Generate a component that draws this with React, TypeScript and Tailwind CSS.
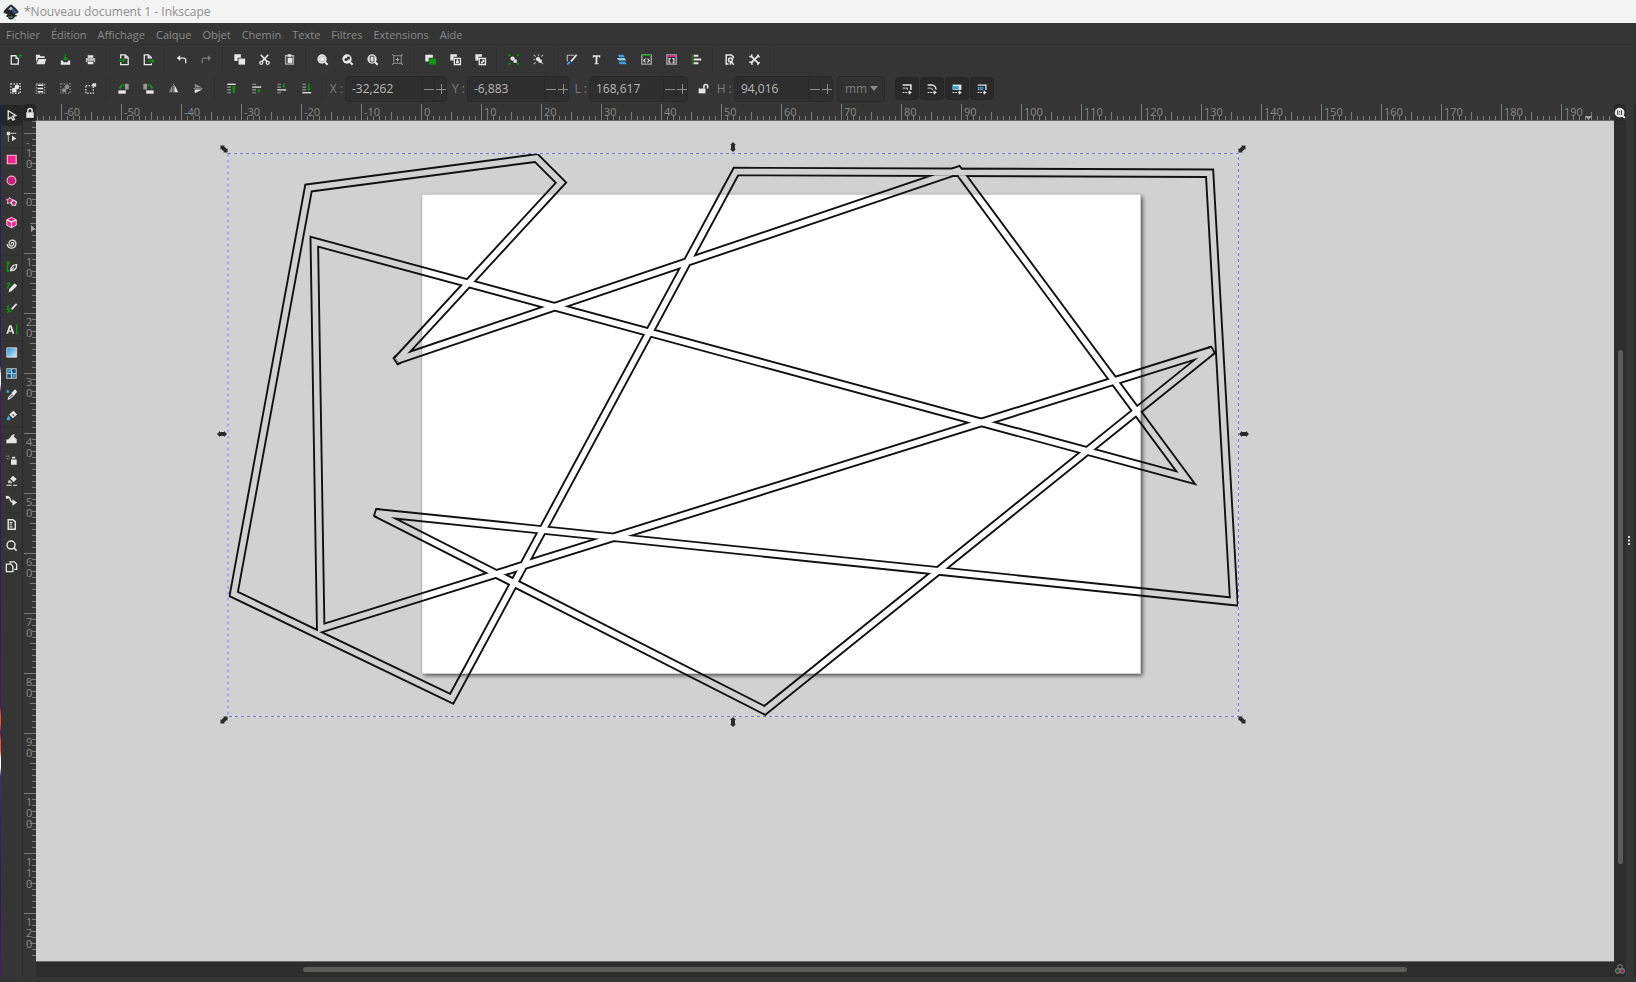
import type { ReactNode } from "react";

const GREEN = "#0b960f";
const BLUE = "#3aa5e0";
const PINK = "#ff1f8f";

function Icon({ children, size = 16 }: { children: ReactNode; size?: number }) {
  return (
    <svg width={size} height={size} viewBox="0 0 16 16" fill="none" stroke="#e6e6e6" strokeWidth={1.4} className="shrink-0">
      {children}
    </svg>
  );
}

const fill = { fill: "#e6e6e6", stroke: "none" };
const green = { fill: GREEN, stroke: "none" };

const icons: Record<string, ReactNode> = {
  new: (
    <>
      <path d="M9 4H3.5v9h7.500V7" />
      <path d="M8 3.500v4h4z" {...fill} />
      <path d="M13 2v4M11 4h4" stroke={GREEN} strokeWidth={1.2} />
    </>
  ),
  open: <path d="M3 3h4l1 1.500h4.500V6.500H5.500L3.500 11zM6.200 7.500H14L12.500 13H3.500z" {...fill} />,
  save: (
    <>
      <path d="M3 9h2l1 2h4l1-2h2v4.500H3z" {...fill} />
      <path d="M7.300 2h1.400v4.500h2L8 9.500 5.300 6.500h2z" {...green} />
    </>
  ),
  print: (
    <>
      <path d="M5 3.500h6V6H5zM5 10h6v3H5z" {...fill} />
      <path d="M3 6.500h10v4.500h-1.500V9.500h-7V11H3z" fill="#b5b5b5" stroke="none" />
    </>
  ),
  import: (
    <>
      <path d="M5 7V3h5l3 3v7.500H5V11" />
      <path d="M9 3v4h4z" {...fill} />
      <path d="M3 8.300h4V6.500L10.500 9 7 11.500V9.700H3z" {...green} />
    </>
  ),
  export: (
    <>
      <path d="M11 7V6L8 3H3.500v10.500H11V12" />
      <path d="M7 3v4h4z" {...fill} />
      <path d="M7 8.800h4.500V7L15 9.500 11.500 12v-1.800H7z" {...green} />
    </>
  ),
  undo: (
    <>
      <path d="M5 6.500h5.500a2 2 0 0 1 2 2V12" />
      <path d="M6.500 3.500v6L3 6.500z" {...fill} />
    </>
  ),
  redo: (
    <g opacity={0.4}>
      <path d="M11 6.500H5.500a2 2 0 0 0-2 2V12" />
      <path d="M9.500 3.500v6L13 6.500z" {...fill} />
    </g>
  ),
  copy: (
    <>
      <path d="M2.500 2.500h7V6H6v3.500H2.500z" {...fill} />
      <path d="M7 7h7v6.500H7z" {...fill} />
    </>
  ),
  cut: (
    <>
      <path d="M4 3l6.500 7M12 3L5.500 10" strokeWidth={1.700} />
      <circle cx="4.500" cy="11.500" r="1.600" />
      <circle cx="11.500" cy="11.500" r="1.600" />
    </>
  ),
  paste: (
    <>
      <path d="M3.800 4h8.400v9H3.800z" stroke="#aaa" />
      <path d="M6 2.500h4V5H6zM6 6h5v6H6z" {...fill} />
    </>
  ),
  zoomSel: (
    <>
      <circle cx="7.500" cy="7.500" r="5" {...fill} />
      <path d="M10 10l3.500 3.500" strokeWidth={2.200} />
      <path d="M5 5h5v5H5z" stroke="#aaa" strokeWidth={1} strokeDasharray="1 1" />
    </>
  ),
  zoomDraw: (
    <>
      <circle cx="7.500" cy="7.500" r="5" {...fill} />
      <path d="M10 10l3.500 3.500" strokeWidth={2.200} />
      <circle cx="6.500" cy="8" r="1.700" fill="#353535" stroke="none" />
      <path d="M7.500 5h3v3h-3z" fill="#353535" stroke="none" />
    </>
  ),
  zoomPage: (
    <>
      <circle cx="7.500" cy="7.500" r="5" {...fill} />
      <path d="M10 10l3.500 3.500" strokeWidth={2.200} />
      <path d="M5.500 4.500h4v6h-4z" stroke="#444" strokeWidth={1} />
    </>
  ),
  zoomCenter: (
    <>
      <path d="M4 4h8v8H4z" stroke="#999" strokeWidth={1} />
      <path d="M8 6v4M6 8h4M2.500 2.500l1.500 1.500M13.500 2.500l-1.500 1.500M2.500 13.500l1.500-1.500M13.500 13.500l-1.500-1.500" stroke="#aaa" strokeWidth={1.100} />
    </>
  ),
  duplicate: (
    <>
      <path d="M2.500 3h8v3H6v4H2.500z" {...fill} />
      <path d="M6.500 7H14v6.500H6.500z" {...green} />
    </>
  ),
  clone: (
    <>
      <path d="M2.500 2.500h7V5H6v4H2.500z" {...fill} />
      <path d="M6.700 6.700h6.600v6.600H6.700z" />
      <path d="M8.500 9.500h3V12h-3zM9 8h2v2H9z" {...fill} />
    </>
  ),
  unclone: (
    <>
      <path d="M2.500 2.500h7V5H6v4H2.500z" {...fill} />
      <path d="M6.700 6.700h6.600v6.600H6.700z" />
      <path d="M8.500 10h2v2h-2zM10 8h2v3h-2z" {...fill} />
    </>
  ),
  group: (
    <>
      <path d="M2.500 2.500h2v2h-2zM11.500 2.500h2v2h-2zM2.500 11.500h2v2h-2zM11.500 11.500h2v2h-2z" {...green} />
      <circle cx="7" cy="7" r="2.300" {...fill} />
      <path d="M8 8h3.500v3.500H8z" {...fill} />
    </>
  ),
  ungroup: (
    <>
      <path d="M3 3l2 2M13 3l-2 2M3 13l2-2M13 13l-2-2M8 2.500v2M2.500 8h2" stroke="#aaa" strokeWidth={1.200} />
      <circle cx="7.500" cy="7.500" r="2.300" {...fill} />
      <path d="M8 8h3.500v3.500H8z" {...fill} />
    </>
  ),
  fillStroke: (
    <>
      <path d="M3.500 10V3.500H11" stroke="#bbb" strokeWidth={1.200} />
      <path d="M13.500 3L7.500 10" strokeWidth={1.800} />
      <path d="M3 13.500c0-2 1.500-3.500 4-3.500 0 2-1.500 3.500-4 3.500z" fill={BLUE} stroke="none" />
    </>
  ),
  text: <path d="M4 3.500h8v2.500h-1V5H9v7h1v1H6v-1h1V5H5v1H4z" {...fill} />,
  layers: (
    <>
      <path d="M4 3h6l1.500 2.500h-6z" fill={BLUE} stroke="none" />
      <path d="M3 6.500h8.500L13 9H5z" fill="#8ed0f5" stroke="none" />
      <path d="M5 10.500h7l1.500 2.500H6z" fill={BLUE} stroke="none" />
    </>
  ),
  xml: (
    <>
      <path d="M3 3h10v10H3z" stroke="#aaa" />
      <path d="M3 3.500h10" stroke={GREEN} />
      <path d="M7 7L5 9l2 2M9 7l2 2-2 2" strokeWidth={1.200} />
    </>
  ),
  selectors: (
    <>
      <path d="M3 3h10v10H3z" stroke="#aaa" />
      <path d="M3 4.500h10" stroke={PINK} />
      <path d="M7 7H5.500v4.500H7M9 7h1.500v4.500H9" strokeWidth={1.200} />
    </>
  ),
  align: (
    <>
      <path d="M3.500 2.500v11" stroke={GREEN} strokeWidth={1} />
      <path d="M5 4h5M5 8h8M5 12h5" strokeWidth={2} />
    </>
  ),
  docProps: (
    <>
      <path d="M12 7V5L10 3.200H4.500v9.600H7" strokeWidth={1.600} />
      <circle cx="9" cy="8.500" r="2" strokeWidth={1.600} />
      <path d="M9.500 10l3 3.500M9 10.500v3" strokeWidth={1.600} />
    </>
  ),
  prefs: (
    <>
      <path d="M5 5l7.500 7.500M12.500 3.500L4 12" strokeWidth={1.900} />
      <path d="M2.500 4.800L4.800 5 5.200 2.500M13.700 5.200L11.500 5l.3-2.500M5.500 13.700L5 11l-2.600-.300M11 13.500l2.500-2.500" strokeWidth={1.500} />
    </>
  ),
  selAll: (
    <>
      <path d="M3 3h10v10H3z" strokeWidth={1.300} strokeDasharray="1.500 1.500" />
      <circle cx="9.500" cy="6.500" r="2.500" {...fill} />
      <path d="M4.500 7.500h4.500v4.500H4.500z" {...fill} />
    </>
  ),
  selLayers: (
    <>
      <path d="M3.500 3h9v10h-9z" stroke="#aaa" strokeWidth={1.200} strokeDasharray="1.500 1.500" />
      <path d="M5 4.500h6M5 8h6M5 11.500h6" strokeWidth={1.700} />
    </>
  ),
  deselect: (
    <g opacity={0.5}>
      <path d="M3 3h10v10H3z" strokeWidth={1.200} strokeDasharray="1.500 1.500" />
      <circle cx="9.500" cy="6.500" r="2.500" {...fill} />
      <path d="M4.500 8h4v4h-4z" {...fill} />
    </g>
  ),
  selBox: (
    <>
      <path d="M3 5h8v8H3z" strokeWidth={1.300} strokeDasharray="1.500 1.500" />
      <path d="M10 2.500h4v3.500h-4z" {...fill} />
    </>
  ),
  rotL: (
    <>
      <path d="M9.500 3h4v6h-4z" fill="#999" stroke="none" />
      <path d="M2.500 10h8v3.500h-8z" {...fill} />
      <path d="M4.500 8.500C4.500 5.500 6 4 8.500 4" stroke={GREEN} />
      <path d="M2.500 6h4l-2 3z" {...green} />
    </>
  ),
  rotR: (
    <>
      <path d="M2.500 3h4v6h-4z" fill="#999" stroke="none" />
      <path d="M5.500 10h8v3.500h-8z" {...fill} />
      <path d="M7.500 4c2.500 0 4 1.500 4 4.500" stroke={GREEN} />
      <path d="M9.500 6h4l-2 3z" {...green} />
    </>
  ),
  flipH: (
    <>
      <path d="M7 4v8H3z" fill="#8a8a8a" stroke="none" />
      <path d="M9 4v8h4z" {...fill} />
      <path d="M8 3v10" strokeWidth={0.800} strokeDasharray="1 1" />
    </>
  ),
  flipV: (
    <>
      <path d="M4 3v4h8z" fill="#8a8a8a" stroke="none" />
      <path d="M4 9v4l8-4z" {...fill} />
      <path d="M3 8h10" strokeWidth={0.800} strokeDasharray="1 1" />
    </>
  ),
  top: (
    <>
      <path d="M3.500 3.500h9" />
      <path d="M3.500 6.500h4M3.500 9.500h4M3.500 12.500h4" stroke="#999" strokeWidth={1.200} />
      <path d="M9.300 13V8H8l2.500-3L13 8h-1.300v5z" {...green} />
    </>
  ),
  raise: (
    <>
      <path d="M3.500 6.500h9.500" />
      <path d="M3.500 3.500h4M3.500 9.500h4M3.500 12.500h4" stroke="#999" strokeWidth={1.200} />
      <path d="M9.800 13v-2.500H8.500L10.500 8l2 2.500h-1.300V13z" {...green} />
    </>
  ),
  lower: (
    <>
      <path d="M3.500 9.500h9.500" />
      <path d="M3.500 3.500h4M3.500 6.500h4M3.500 12.500h4" stroke="#999" strokeWidth={1.200} />
      <path d="M9.800 2.500V5H8.500l2 2.500 2-2.500h-1.300V2.500z" {...green} />
    </>
  ),
  bottom: (
    <>
      <path d="M3.500 12.500h9.500" />
      <path d="M3.500 3.500h4M3.500 6.500h4M3.500 9.500h4" stroke="#999" strokeWidth={1.200} />
      <path d="M9.800 2.500V8H8.500l2 3 2-3h-1.300V2.500z" {...green} />
    </>
  ),
  unlock: (
    <>
      <path d="M2 8h8.500v6H2z" {...fill} />
      <path d="M8.500 8V5.500a2.300 2.300 0 0 1 4.600 0V8" strokeWidth={1.900} />
    </>
  ),
  lock: (
    <>
      <path d="M3 7h10v7.500H3z" {...fill} />
      <path d="M5.200 7V4.700a2.800 2.800 0 0 1 5.600 0V7" strokeWidth={2} />
    </>
  ),
  scaleStroke: (
    <>
      <path d="M3 3.500h9.500V9" strokeWidth={1.700} />
      <path d="M3 7h5.500v2" stroke="#aaa" strokeWidth={1.200} />
      <path d="M3 12h7" strokeDasharray="2 1" />
      <path d="M10 9.500v5l3.500-2.500z" {...fill} />
    </>
  ),
  scaleRadii: (
    <>
      <path d="M3 3.500h4.500a5 5 0 0 1 5 5" strokeWidth={1.700} />
      <path d="M3 7h3a3 3 0 0 1 3 2.500" stroke="#aaa" strokeWidth={1.200} />
      <path d="M3 12h7" strokeDasharray="2 1" />
      <path d="M10 9.500v5l3.500-2.500z" {...fill} />
    </>
  ),
  moveGradient: (
    <>
      <path d="M3 3h10v6H3z" {...fill} />
      <path d="M3 4.500h7v4H3z" fill={BLUE} stroke="none" />
      <path d="M3 12h7" strokeDasharray="2 1" />
      <path d="M10 9.500v5l3.500-2.500z" {...fill} />
    </>
  ),
  movePattern: (
    <>
      <path d="M3 3.500h9.500V9" />
      <path d="M3 5.500h7v4H3z" fill="#2e6d96" stroke="none" />
      <path d="M4 6v3M7 6v3" stroke="#8ed0f5" strokeWidth={1} strokeDasharray="1 1" />
      <path d="M3 12h7" strokeDasharray="2 1" />
      <path d="M10 9.500v5l3.500-2.500z" {...fill} />
    </>
  ),
  select: <path d="M4.500 3l8 5-3 .8 1.700 3.200-1.700 1-1.800-3.300L4.500 12z" />,
  node: (
    <>
      <path d="M3 3h3.500v3.500H3z" {...fill} />
      <path d="M6 4.700h7M4.700 6v7.500" stroke="#aaa" strokeWidth={1.200} />
      <path d="M8.500 7v6l4.500-3z" {...fill} />
    </>
  ),
  rect: <path d="M3.500 3.500h9.500v9H3.500z" fill={PINK} stroke="#f3b6d5" strokeWidth={1.200} />,
  ellipse: <circle cx="8" cy="8" r="4.700" fill="#c4217a" stroke="#e8a9cb" strokeWidth={1.300} />,
  star: (
    <>
      <path d="M6 3.500l1.300 2 2.400.3-1.500 2 .5 2.500L6 9.500l-2.500.8.500-2.500-1.500-2 2.400-.3z" fill="#b92a78" stroke="#d9c3cf" strokeWidth={1} />
      <path d="M10.500 6.500l2.800 2-1 3.500H8.700l-1-3.500z" fill="#b92a78" stroke="#e6e6e6" strokeWidth={1.200} />
    </>
  ),
  box3d: (
    <>
      <path d="M8 2.500l5 2.500v6l-5 2.500L3 11V5z" fill={PINK} stroke="#f3d3e2" strokeWidth={1} />
      <path d="M3 5l5 2.500L13 5M8 7.500v6" stroke="#fff" strokeWidth={1.200} />
      <path d="M8 4l2.500 1.200L8 6.500 5.500 5.200z" fill="#b92a78" stroke="none" />
    </>
  ),
  spiral: <path d="M8 8.500c-.8-1.500 1.500-2.200 2.200-.7C11 10 8.500 11.300 6.700 10.300 4.300 8.800 5.300 5 8 4.500c3-.5 5.300 2 4.700 4.700-.4 2-2 3.500-4.200 3.800-2.500.2-5-1.500-5.200-4.500" strokeWidth={1.300} />,
  pen: (
    <>
      <path d="M3.500 13c-.5-3 0-6 1-8" stroke={GREEN} />
      <path d="M3 2.500h3v3H3zM3 11.500h3v2H3z" {...green} />
      <path d="M13.500 6c-3 0-6 1-6.500 6.500 4 0 6.500-2 6.500-6.500zM7 13l3.500-4" strokeWidth={1.300} />
    </>
  ),
  pencil: (
    <>
      <path d="M3 4.500C5 2.500 7 3.500 6 5S2.500 8 4.500 9" stroke={GREEN} />
      <path d="M11.500 3.500L14 6l-6 6-3 1 .5-3.500z" {...fill} />
    </>
  ),
  calligraphy: (
    <>
      <path d="M13.500 3L8 9" strokeWidth={1.800} />
      <path d="M3 6l2-1-1.500 4 2-.5L4 12l4-1.500" stroke={GREEN} strokeWidth={1.200} />
    </>
  ),
  textTool: (
    <>
      <path d="M5.500 3.500h2.500l3 9H9l-.6-2H5.100l-.6 2H2.500zM5.600 9h2.200L6.700 5.500z" {...fill} />
      <path d="M13.500 2.500v11" stroke={GREEN} />
    </>
  ),
  gradient: (
    <>
      <defs>
        <linearGradient id="sky" x1="0" y1="0" x2="1" y2="1">
          <stop offset="0" stopColor="#1d8fd8" />
          <stop offset="1" stopColor="#d9f0fc" />
        </linearGradient>
      </defs>
      <path d="M3 3h10.500v10H3z" fill="url(#sky)" stroke="#d0d0d0" strokeWidth={1} />
    </>
  ),
  mesh: (
    <>
      <path d="M3 3h10v10H3z" fill="#1b4c70" stroke="#c8c8c8" strokeWidth={1.100} />
      <path d="M8 3c-1 2 1 3 0 5s1 3 0 5M3 8c2-1 3 1 5 0s3 1 5 0" stroke="#a9dcf8" strokeWidth={1.200} />
      <path d="M4 4h3v3H4zM9 9h3v3H9z" fill={BLUE} stroke="none" />
    </>
  ),
  dropper: (
    <>
      <path d="M6 12.500l-1.500.5.500-2 4-4 1.500 1.500z" strokeWidth={1.100} />
      <path d="M8 6l4-3.500L14 5l-3.500 4z" {...fill} />
      <path d="M4 2.500c1.500 2 1.700 2.500 1.500 3.200-.5 1-2.500 1-3 0C2.300 5 3 4 4 2.500z" fill={BLUE} stroke="none" />
    </>
  ),
  bucket: (
    <>
      <path d="M5.500 7L10 3l4 4-4.500 4z" {...fill} />
      <path d="M9 6l2 1.500L9.500 9z" fill="#353535" stroke="none" />
      <path d="M5 8c2 2.500 2 3.500 1.500 4.300-.7 1.300-3 1.300-3.500 0C2.700 11.500 3.500 10 5 8z" fill={BLUE} stroke="none" />
    </>
  ),
  tweak: <path d="M2.500 13V9c2.500 0 3.500-1 4.500-3s3-3 4.500-2.500l-1 2.500c1 1.500 3 1.500 3 3v4z" {...fill} />,
  spray: (
    <>
      <path d="M7.500 8h6v5.500h-6zM8.500 5h3.500v2H8.500z" {...fill} />
      <path d="M2.500 4.500H6M3 7h3" stroke="#999" strokeDasharray="1 1" />
    </>
  ),
  eraser: (
    <>
      <path d="M9.500 3l4 3.500-3 3-4-3.500z" {...fill} />
      <path d="M5.500 7l3.500 3-1 1H4.500L4 9z" fill="#bbb" stroke="none" />
      <path d="M2.500 13H8M9.500 13H14" strokeWidth={1.200} />
    </>
  ),
  connector: (
    <>
      <path d="M2.500 3.500H5c2 0 1 5 4 5h2" strokeWidth={1.500} />
      <path d="M9 5.500v7L14 9z" {...fill} />
      <path d="M2 2h3v3H2z" {...fill} />
    </>
  ),
  measure: (
    <>
      <path d="M4.500 3h5l2.500 2v8H4.500z" strokeWidth={1.500} />
      <path d="M6 6h3M6 8.300h2.500M6 10.500h3" strokeWidth={1.200} />
    </>
  ),
  zoom: (
    <>
      <circle cx="7.500" cy="7.500" r="4.300" strokeWidth={1.500} />
      <path d="M10.500 10.500l3 3" strokeWidth={1.700} />
    </>
  ),
  pages: (
    <>
      <path d="M6.500 5V3H11l2.500 2.500V11H11" strokeWidth={1.400} />
      <path d="M2.500 5.500h5L9.500 8v5.500h-7z" strokeWidth={1.400} />
    </>
  ),
  oneToOne: (
    <>
      <circle cx="7.500" cy="7.500" r="6.500" {...fill} />
      <path d="M11 11l3.500 3.500" strokeWidth={2.500} />
      <path d="M5 4.500v6M10 4.500v6M7.500 5.500v1.500M7.500 8.500v1.500" stroke="#353535" strokeWidth={1.300} />
    </>
  ),
  color: (
    <>
      <circle cx="8" cy="5" r="3" stroke="#777" />
      <circle cx="5" cy="10.500" r="3" fill="#1f5a2c" stroke="#777" />
      <circle cx="11" cy="10.500" r="3" fill="#8d2360" stroke="#777" />
    </>
  ),
};

const menus = ["Fichier", "Édition", "Affichage", "Calque", "Objet", "Chemin", "Texte", "Filtres", "Extensions", "Aide"];

const commandGroups = [
  ["new", "open", "save", "print"],
  ["import", "export"],
  ["undo", "redo"],
  ["copy", "cut", "paste"],
  ["zoomSel", "zoomDraw", "zoomPage", "zoomCenter"],
  ["duplicate", "clone", "unclone"],
  ["group", "ungroup"],
  ["fillStroke", "text", "layers", "xml", "selectors", "align"],
  ["docProps", "prefs"],
];

const selectGroups = [
  ["selAll", "selLayers", "deselect", "selBox"],
  ["rotL", "rotR", "flipH", "flipV"],
  ["top", "raise", "lower", "bottom"],
];

const toolGroups = [
  ["select", "node"],
  ["rect", "ellipse", "star", "box3d", "spiral"],
  ["pen", "pencil", "calligraphy", "textTool"],
  ["gradient", "mesh", "dropper", "bucket"],
  ["tweak", "spray", "eraser", "connector"],
  ["measure", "zoom", "pages"],
];

function IconGroups({ groups }: { groups: string[][] }) {
  return (
    <>
      {groups.map((group) => (
        <div key={group[0]} className="flex items-center">
          {group.map((name) => (
            <button key={name} aria-label={name} className="flex h-6 w-[25px] items-center justify-center">
              <Icon size={15}>{icons[name]}</Icon>
            </button>
          ))}
          <span className="mx-[3px] h-6 w-[2px] border-l border-[#303030]" />
        </div>
      ))}
    </>
  );
}

function NumberField({ id, label, value, width }: { id: string; label: string; value: string; width: string }) {
  return (
    <div className="flex items-center gap-[2px]">
      <label htmlFor={id} className="flex w-[14px] justify-end text-xs whitespace-nowrap text-[#7d7d7d]">
        {label} :
      </label>
      <div className={`flex h-[26px] items-center rounded-[4px] border border-[#292929] bg-[#2e2e2e] text-[#8d8d8d] ${width}`}>
        <input id={id} defaultValue={value} className="w-0 flex-1 bg-transparent pl-[6px] text-xs text-[#b8b8b8] outline-none" />
        <button aria-label={`${label} -`} className="flex h-full w-3 items-center justify-center border-l border-[#2a2a2a]">
          <svg width="10" height="10" viewBox="0 0 10 10" stroke="currentColor"><path d="M0 5.500h10" /></svg>
        </button>
        <button aria-label={`${label} +`} className="flex h-full w-3 items-center justify-center border-l border-[#2a2a2a]">
          <svg width="10" height="10" viewBox="0 0 10 10" stroke="currentColor"><path d="M0 5.500h10M5.500 0v10" /></svg>
        </button>
      </div>
    </div>
  );
}

const steps = [0, 1, 2, 3, 4, 5, 6, 7, 8, 9];

function HorizontalRuler() {
  const marks = Array.from({ length: 26 }, (_, i) => -60 + i * 10);
  const ticks = steps.map((i) => `M${i * 6 + 0.5} ${i === 0 ? 0 : i === 5 ? 8 : 12}V17`).join("");
  return (
    <div className="flex h-[17px] min-w-0 overflow-hidden border-b border-[#6b6b6b] text-[#8c8c8c]">
      <div className="flex w-[25px] shrink-0 justify-end overflow-hidden">
        <svg width="60" height="17" className="shrink-0" stroke="#7b7b7b"><path d={ticks} /></svg>
      </div>
      {marks.map((m) => (
        <div key={m} className="grid w-[60px] shrink-0">
          <svg width="60" height="17" className="col-start-1 row-start-1" stroke="#7b7b7b">
            <path d={ticks} />
            {m === 190 && <path d="M24 12h7l-3.500 4z" fill="#a5a5a5" stroke="none" />}
          </svg>
          <span className="col-start-1 row-start-1 pl-[3px] text-[11px] leading-[15px]">{m}</span>
        </div>
      ))}
    </div>
  );
}

function VerticalRuler() {
  const marks = Array.from({ length: 14 }, (_, i) => -10 + i * 10);
  const ticks = steps.map((i) => `M${i === 0 ? 1 : i === 5 ? 7 : 9} ${i * 6 + 0.5}H13`).join("");
  return (
    <div className="flex min-h-0 flex-col overflow-hidden text-[#8c8c8c]">
      <div className="flex h-3 shrink-0 flex-col justify-end overflow-hidden">
        <svg width="13" height="60" className="shrink-0" stroke="#7b7b7b"><path d={ticks} /></svg>
      </div>
      {marks.map((m) => (
        <div key={m} className="grid h-[60px] shrink-0">
          <svg width="13" height="60" className="col-start-1 row-start-1" stroke="#7b7b7b">
            <path d={ticks} />
            {m === 0 && <path d="M8 32v7l4-3.500z" fill="#a5a5a5" stroke="none" />}
          </svg>
          <div className="col-start-1 row-start-1 flex flex-col pt-[3px] pl-[3px] text-[11px] leading-[11px]">
            {String(m).split("").map((c, i) => (
              <span key={i}>{c}</span>
            ))}
          </div>
        </div>
      ))}
    </div>
  );
}

const outline =
  "M308.5 188L536.3 158L561 182.700L397.600 359.800L958.200 170.400L1185.700 477.700L314.300 241.700L320.700 628.700L1212.300 350.300L764.800 710.400L375.800 512.700L1233.800 601.500L1209.600 173.200L736 171.500L451.700 698.800L233.700 594Z";

// flat ends of the three sharpest corners
const bevels = "M396.200 355.200L393.500 358.200L397.600 364.400L401 363.200M1207.500 347.800L1211.400 346.600L1214.800 353L1212 355.300M380 509.300L376.200 508.900L374 515.800L377.500 517.700";

const handles = [
  [224, 149, 45],
  [733, 147, 90],
  [1242, 149, -45],
  [222, 434, 0],
  [1244, 434, 0],
  [224, 720, -45],
  [733, 722, 90],
  [1242, 720, 45],
];

function Drawing() {
  return (
    <svg className="block h-full w-full" aria-label="Dessin">
      <defs>
        <filter id="pageShadow" x="-5%" y="-5%" width="110%" height="110%">
          <feDropShadow dx="2" dy="2" stdDeviation="2" floodColor="#000" floodOpacity="0.65" />
        </filter>
        {/* keeps only the contour of the widened path */}
        <mask id="contour" maskUnits="userSpaceOnUse" x="200" y="120" width="1080" height="640">
          <path d={outline} fill="none" stroke="#fff" strokeWidth={9.4} strokeMiterlimit={3.5} />
          <path d={outline} fill="none" stroke="#000" strokeWidth={5.6} strokeMiterlimit={3.5} />
        </mask>
      </defs>
      <g transform="translate(-36 -121)">
        <rect x="422" y="194.500" width="718.500" height="479" fill="#fff" filter="url(#pageShadow)" />
        <rect x="422" y="194.500" width="718.500" height="479" fill="#fff" stroke="#b9b9b9" strokeWidth={0.6} />
        <rect x="200" y="120" width="1080" height="640" fill="#111" mask="url(#contour)" />
        <path d={bevels} fill="none" stroke="#111" strokeWidth={1.8} />
        <rect x="228" y="153.500" width="1010.500" height="563" fill="none" stroke="#e2e2ee" />
        <rect x="228" y="153.500" width="1010.500" height="563" fill="none" stroke="#7676d8" strokeDasharray="3 3" />
        {handles.map(([x, y, r]) => (
          <path
            key={`${x}-${y}`}
            d="M-5 0L-2 -3V-2H2V-3L5 0L2 3V2H-2V3Z"
            transform={`translate(${x} ${y}) rotate(${r})`}
            fill="#2a2a2a"
          />
        ))}
      </g>
    </svg>
  );
}

export default function App() {
  return (
    <div className="flex h-screen flex-col overflow-hidden bg-[#353535] font-['Open_Sans','Noto_Sans',sans-serif]">
      <header className="flex h-[23px] shrink-0 items-center gap-[5px] bg-[#f3f3f3] pl-[3px]">
        <svg width="16" height="16" viewBox="0 0 16 16">
          <path d="M8 .5C9 .5 15.500 6.500 15.500 8c0 1.500-3.500 1.500-3.500 2.300s2 .7 2 1.500-2 .7-2.500 1.500C11 14 10 15.500 8 15.500S5.500 14.500 5 13.500c-.5-.8-2-.7-2-1.500s1.500-.8 1.500-1.600S.5 9.500.5 8 7 .5 8 .5z" fill="#22262d" />
          <path d="M8 2.500L11 5.500l-1.500.5L8.500 5.500 7.500 6.500 6.500 5.500 5 5.500z" fill="#b9c2cc" />
          <path d="M9.500 4L14.500 8 12 9.500 9 8z" fill="#35577f" />
          <path d="M5.500 13h4" stroke="#8a929c" />
        </svg>
        <h1 className="text-xs text-[#8f8f8f]">*Nouveau document 1 - Inkscape</h1>
      </header>

      <nav className="flex h-[22px] shrink-0 items-center gap-[11px] border-b border-[#303030] pt-[3px] pl-[6px] text-[11px] text-[#8a8a8a]">
        {menus.map((m) => (
          <button key={m}>{m}</button>
        ))}
      </nav>

      <div className="flex h-7 shrink-0 items-center pl-[3px]">
        <IconGroups groups={commandGroups} />
      </div>

      <div className="flex h-[31px] shrink-0 items-center pl-[3px]">
        <IconGroups groups={selectGroups} />
        <div className="flex items-center gap-1 pl-[2px]">
          <NumberField id="pos-x" label="X" value="-32,262" width="w-[102px]" />
          <NumberField id="pos-y" label="Y" value="-6,883" width="w-[102px]" />
          <NumberField id="size-w" label="L" value="168,617" width="w-[99px]" />
          <button aria-label="Verrouiller" className="flex w-[22px] justify-center">
            <Icon size={13}>{icons.unlock}</Icon>
          </button>
          <NumberField id="size-h" label="H" value="94,016" width="w-[99px]" />
          <div className="relative flex items-center">
            <select aria-label="Unité" className="h-[26px] w-12 appearance-none rounded-[4px] border border-[#2a2a2a] bg-[#323232] pl-[7px] text-xs text-[#7d7d7d]">
              <option>mm</option>
            </select>
            <svg width="8" height="5" viewBox="0 0 8 5" className="pointer-events-none absolute right-[7px]"><path d="M0 0h8L4 5z" fill="#8a8a8a" /></svg>
          </div>
          <div className="flex gap-px pl-[6px]">
            {["scaleStroke", "scaleRadii", "moveGradient", "movePattern"].map((name) => (
              <button key={name} aria-label={name} aria-pressed className="flex h-[23px] w-6 items-center justify-center rounded-[4px] border border-[#262626] bg-[#292929]">
                <Icon size={14}>{icons[name]}</Icon>
              </button>
            ))}
          </div>
        </div>
      </div>

      <main className="flex min-h-0 flex-1 pb-[5px]">
        <div className="w-px shrink-0 bg-[linear-gradient(#1d2350,#32205a_30%,#fff_31%,#fff_32%,#4a1a5e_33%,#2b1d55_50%,#4a1a5e_69%,#ff4a3a_70%,#ff4a3a_71%,#5a1a5e_72%,#ff4a3a_73%,#ff4a3a_74%,#fff_75%,#fff_76%,#3a2a8a_77%,#2b1d55_90%,#4a1a7e)]" />
        <aside className="flex w-[22px] shrink-0 flex-col border-r border-[#292929] pt-px">
          {toolGroups.map((group) => (
            <div key={group[0]} className="flex flex-col border-b-2 border-[#313131] last:border-b-0">
              {group.map((name) => (
                <button
                  key={name}
                  aria-label={name}
                  className={`flex h-[21px] items-center justify-center ${name === "select" ? "rounded-[4px] bg-[#262626]" : ""}`}
                >
                  <Icon size={15}>{icons[name]}</Icon>
                </button>
              ))}
            </div>
          ))}
        </aside>

        <div className="grid min-w-0 flex-1 grid-cols-[13px_minmax(0,1fr)_12px] grid-rows-[17px_minmax(0,1fr)_16px]">
          <button aria-label="Verrouiller les guides" className="flex items-center justify-center rounded-[3px] bg-[#262626]">
            <Icon size={12}>{icons.lock}</Icon>
          </button>
          <HorizontalRuler />
          <button aria-label="Zoom 1:1" className="flex items-center justify-center rounded-[3px] bg-[#2a2a2a]">
            <Icon size={12}>{icons.oneToOne}</Icon>
          </button>

          <VerticalRuler />
          <div className="min-w-0 overflow-hidden bg-[#d1d1d1]">
            <Drawing />
          </div>
          <div className="flex flex-col items-center bg-[#2d2d2d]">
            <div className="grow-[229]" />
            <div className="w-[5px] grow-[514] rounded-full bg-[#5c5c5a]" />
            <div className="grow-[97]" />
          </div>

          <div />
          <div className="flex items-center border-t border-[#6b6b6b] bg-[#2d2d2d]">
            <div className="grow-[267]" />
            <div className="h-[5px] grow-[1104] rounded-full bg-[#5c5c5a]" />
            <div className="grow-[207]" />
          </div>
          <button aria-label="Gestion des couleurs" className="flex items-center justify-center rounded-[3px] bg-[#2a2a2a]">
            <Icon size={12}>{icons.color}</Icon>
          </button>
        </div>

        <div className="flex w-[10px] shrink-0 flex-col items-start justify-center border-r-2 border-[#292929] pl-[2px]">
          <svg width="3" height="9" viewBox="0 0 3 9" fill="#d5d5d5"><path d="M0 0h2v2H0zM0 3.500h2v2H0zM0 7h2v2H0z" /></svg>
        </div>
      </main>
    </div>
  );
}
